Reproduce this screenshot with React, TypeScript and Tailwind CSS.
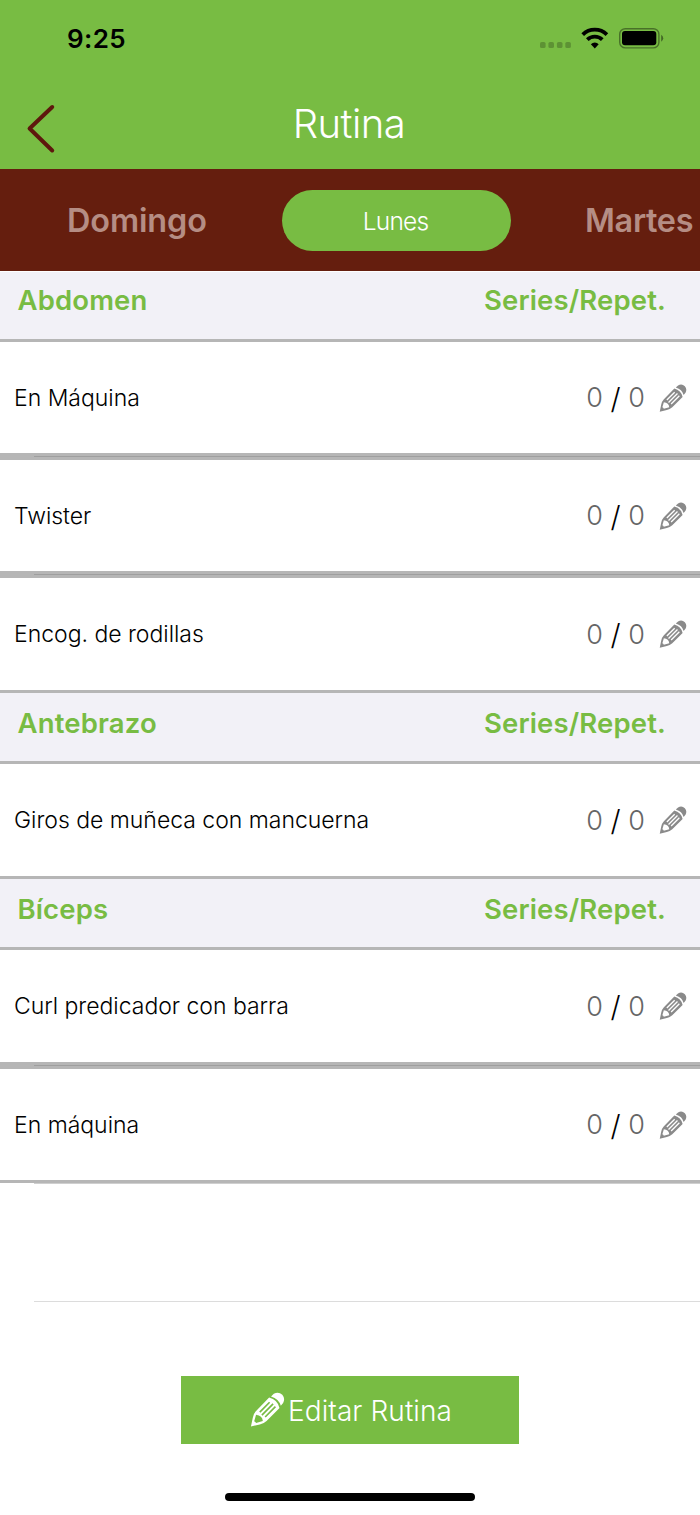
type Group = { title: string; exercises: string[] };

const groups: Group[] = [
  { title: "Abdomen", exercises: ["En Máquina", "Twister", "Encog. de rodillas"] },
  { title: "Antebrazo", exercises: ["Giros de muñeca con mancuerna"] },
  { title: "Bíceps", exercises: ["Curl predicador con barra", "En máquina"] },
];

function Pencil({ className }: { className: string }) {
  return (
    <svg viewBox="0 0 30 30" className={className} fill="currentColor">
      <path d="M18 3.8 L20.4 1.6 Q24.3 -.7 27.7 2.3 Q30.4 5.6 28.4 9.4 L26.4 11.8 Q24.8 5.8 18 3.8Z" />
      <path
        fillRule="evenodd"
        d="M16.4 4.8 Q23.6 6.6 25.3 13.8 L14.2 24.8 Q11.6 27.2 8.4 27.8 L.8 29.6 L2.4 22 Q2.9 18.9 5 16.6Z M5.2 19.6 L3.6 25 Q4.7 25.4 5.2 26.6 L11 24.8 Q10.6 20.4 5.2 19.6Z M17.3 9.3 L8.9 17.7 L7.9 16.7 L16.3 8.3Z M20.3 10.7 L10.7 20.3 L9.7 19.3 L19.3 9.7Z M22.3 13.1 L13.5 21.9 L12.5 20.9 L21.3 12.1Z"
      />
    </svg>
  );
}

function StatusBar() {
  return (
    <div className="flex h-[78px] items-center justify-between pr-[36px] pl-[67px]">
      <span className="text-[26px] leading-none font-semibold tracking-[0.4px] text-black">9:25</span>
      <svg viewBox="0 0 124 24" className="h-[24px] w-[124px]">
        <g fill="#000" fillOpacity="0.22">
          <rect x="0" y="15" width="5.6" height="6" rx="1.6" />
          <rect x="8.4" y="15" width="5.6" height="6" rx="1.6" />
          <rect x="16.9" y="15" width="5.6" height="6" rx="1.6" />
          <rect x="25.3" y="15" width="5.6" height="6" rx="1.6" />
        </g>
        <g fill="none" stroke="#000" strokeWidth="3.8">
          <path d="M42.7 7.6 A17.4 17.4 0 0 1 66.9 7.6" />
          <path d="M47.3 12.6 A10.8 10.8 0 0 1 62.3 12.6" />
        </g>
        <path d="M54.8 21.4 L50.9 17.2 A5.6 5.6 0 0 1 58.7 17.2Z" />
        <rect x="79.7" y="1.7" width="39.2" height="19.2" rx="5.6" fill="none" stroke="#000" strokeOpacity="0.4" strokeWidth="1.4" />
        <rect x="82" y="4" width="34.3" height="14.3" rx="3" />
        <path d="M121.2 7.8 Q123.2 9 123.2 11.3 Q123.2 13.6 121.2 14.8Z" fillOpacity="0.45" />
      </svg>
    </div>
  );
}

function ExerciseRow({ name, compact }: { name: string; compact: boolean }) {
  return (
    <div
      className={`flex items-center justify-between border-y-[3px] border-[#b6b6b6] bg-white pr-[13px] pl-[14px] ${
        compact ? "h-[117px]" : "h-[118px]"
      }`}
    >
      <span
        className={`text-[23px] leading-none font-light tracking-[-0.02px] text-black ${compact ? "pt-[2px]" : "pt-px"}`}
      >
        {name}
      </span>
      <div className="flex items-center leading-none">
        <span className="w-[17px] text-center text-[27px] font-light text-[#666]">0</span>
        <span className="w-[25px] pt-px text-center text-[29px] font-light text-black">/</span>
        <span className="w-[17px] text-center text-[27px] font-light text-[#666]">0</span>
        <Pencil className="ml-[14px] size-[28px] text-[#8a8a8a]" />
      </div>
    </div>
  );
}

function RowDivider() {
  return (
    <div className="h-px bg-[#b6b6b6] pl-[34px]">
      <div className="h-px bg-[#9f9f9f]" />
    </div>
  );
}

export default function App() {
  return (
    <div className="flex h-[1515px] w-[700px] flex-col overflow-hidden bg-white font-['Inter',sans-serif]">
      <header className="h-[169px] bg-[#78bc43]">
        <StatusBar />
        <div className="grid h-[91px] grid-cols-[100px_1fr_100px]">
          <svg viewBox="0 0 30 50" className="mt-[26px] ml-[26px] h-[50px] w-[30px]">
            <path
              d="M26.2 3 L3.6 24.5 L26.2 46.5"
              fill="none"
              stroke="#5e180d"
              strokeWidth="4"
              strokeLinecap="round"
              strokeLinejoin="round"
            />
          </svg>
          <h1 className="pt-[26px] pr-[2px] text-center text-[40px] leading-[40px] font-light tracking-[-0.5px] text-white">
            Rutina
          </h1>
        </div>
      </header>

      <nav className="flex h-[102px] items-center overflow-hidden bg-[#651e0e] text-[32.4px] font-semibold text-[#b58d84]">
        <span className="w-[217px] shrink-0 pt-[2px] pl-[67px] tracking-[-0.1px]">Domingo</span>
        <span className="ml-[65px] flex h-[61px] w-[229px] shrink-0 items-center justify-center rounded-full bg-[#78bc43] pt-[3px] pr-[2px] text-[24.5px] font-light tracking-[-0.8px] text-white">
          Lunes
        </span>
        <span className="ml-[74px] shrink-0 pt-[2px] tracking-[-0.3px]">Martes</span>
      </nav>

      <main className="flex flex-col">
        {groups.map((group, g) => (
          <section key={group.title} className={g === 0 ? "border-t border-white" : ""}>
            <div
              className={`flex justify-between bg-[#f2f1f7] pr-[34px] pl-[17.5px] text-[27.5px] font-semibold tracking-[0.15px] text-[#78bc43] ${
                g === 0 ? "h-[67px] leading-[57px]" : "h-[68px] leading-[60px]"
              }`}
            >
              <h2>{group.title}</h2>
              <span>Series/Repet.</span>
            </div>
            {group.exercises.map((name, i) => {
              const last = i === group.exercises.length - 1;
              const compact = group.exercises.length > 1 && !(last && g === 0) && !(g === 2 && i === 0);
              return (
                <div key={name}>
                  <ExerciseRow name={name} compact={compact} />
                  {!last && <RowDivider />}
                </div>
              );
            })}
          </section>
        ))}
        <div className="flex h-[119px] flex-col justify-between pl-[34px]">
          <div className="h-px bg-[#cfcfcf]" />
          <div className="h-px bg-[#dcdcdc]" />
        </div>
      </main>

      <footer className="flex flex-col items-center pt-[74px]">
        <button className="flex h-[68px] w-[338px] items-center bg-[#78bc43] pl-[69px] text-[28px] leading-none font-light tracking-[0.08px] text-white">
          <Pencil className="mr-[3px] mb-px size-[35px]" />
          <span className="pt-px">Editar Rutina</span>
        </button>
        <div className="mt-[49px] h-[8px] w-[250px] rounded-full bg-black" />
      </footer>
    </div>
  );
}
